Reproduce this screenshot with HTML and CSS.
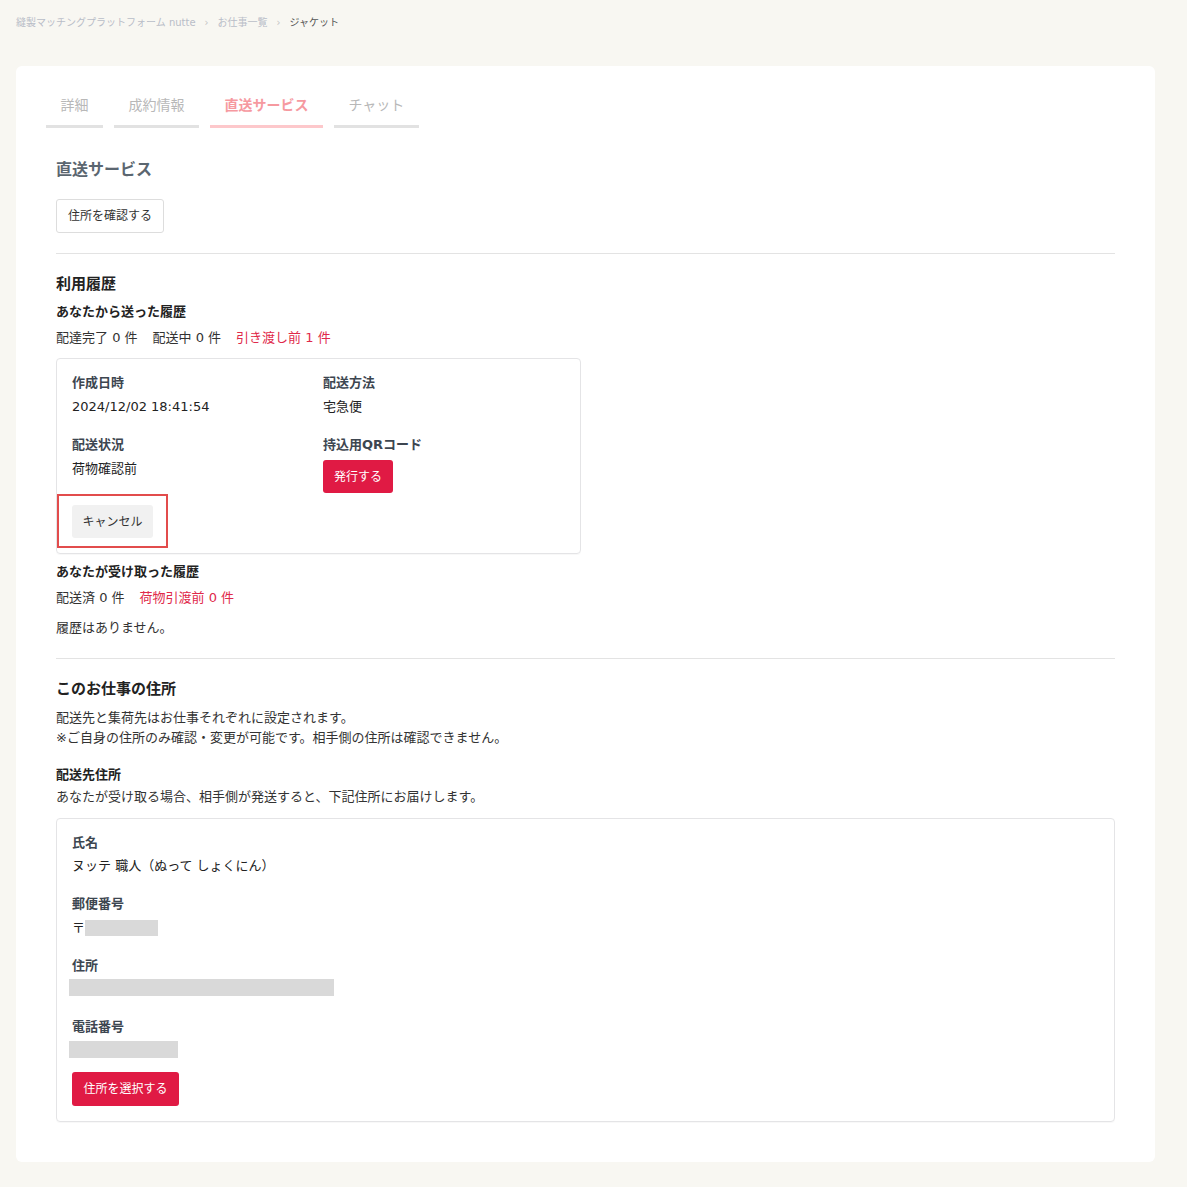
FILE: index.html
```html
<!DOCTYPE html>
<html lang="ja">
<head>
  <meta charset="UTF-8">
  <meta name="viewport" content="width=device-width, initial-scale=1.0">
  <title>ジャケット | nutte</title>
  <link rel="stylesheet" href="styles.css">
</head>
<body>
  <div id="page">
    <nav class="breadcrumb">
      <a href="#">縫製マッチングプラットフォーム nutte</a>
      <span class="sep">›</span>
      <a href="#">お仕事一覧</a>
      <span class="sep">›</span>
      <span class="current">ジャケット</span>
    </nav>

    <div class="panel">
      <ul class="tabs">
        <li class="tab">詳細</li>
        <li class="tab">成約情報</li>
        <li class="tab active">直送サービス</li>
        <li class="tab">チャット</li>
      </ul>

      <h2 class="page-title">直送サービス</h2>
      <button class="btn btn-outline">住所を確認する</button>

      <hr class="divider">

      <!-- 利用履歴 -->
      <h3 class="section-title">利用履歴</h3>
      <h4 class="sub-title">あなたから送った履歴</h4>
      <p class="counts">
        <span>配達完了 0 件</span>
        <span>配送中 0 件</span>
        <span class="red">引き渡し前 1 件</span>
      </p>

      <div class="box history-box">
        <div class="field">
          <div class="label">作成日時</div>
          <div class="value">2024/12/02 18:41:54</div>
        </div>
        <div class="field">
          <div class="label">配送方法</div>
          <div class="value">宅急便</div>
        </div>
        <div class="field">
          <div class="label">配送状況</div>
          <div class="value">荷物確認前</div>
        </div>
        <div class="field">
          <div class="label">持込用QRコード</div>
          <button class="btn btn-red">発行する</button>
        </div>
        <div class="cancel-row">
          <span class="highlight">
            <button class="btn btn-gray">キャンセル</button>
          </span>
        </div>
      </div>

      <h4 class="sub-title received">あなたが受け取った履歴</h4>
      <p class="counts">
        <span>配送済 0 件</span>
        <span class="red">荷物引渡前 0 件</span>
      </p>
      <p class="empty">履歴はありません。</p>

      <hr class="divider">

      <!-- 住所 -->
      <h3 class="section-title address-title">このお仕事の住所</h3>
      <p class="note">配送先と集荷先はお仕事それぞれに設定されます。<br>※ご自身の住所のみ確認・変更が可能です。相手側の住所は確認できません。</p>

      <h4 class="sub-title dest">配送先住所</h4>
      <p class="note">あなたが受け取る場合、相手側が発送すると、下記住所にお届けします。</p>

      <div class="box address-box">
        <div class="field">
          <div class="label">氏名</div>
          <div class="value name">ヌッテ 職人（ぬって しょくにん）</div>
        </div>
        <div class="field">
          <div class="label">郵便番号</div>
          <div class="value zip-row">〒<span class="masked zip"></span></div>
        </div>
        <div class="field">
          <div class="label">住所</div>
          <div class="masked addr"></div>
        </div>
        <div class="field tel-field">
          <div class="label">電話番号</div>
          <div class="masked tel"></div>
        </div>
        <button class="btn btn-red select-btn">住所を選択する</button>
      </div>
    </div>
  </div>
</body>
</html>
```

FILE: styles.css
```css
body {
  margin: 0;
  padding: 0;
  background-color: #f8f7f2;
  color: #222222;
  font-family: "DejaVu Sans", "Noto Sans CJK JP", sans-serif;
}

#page {
  padding: 17px 32px 25px 16px;
}

.breadcrumb {
  display: flex;
  align-items: center;
  gap: 9px;
  font-size: 10px;
  line-height: 12px;
  color: #b9bdc8;
}
.breadcrumb a {
  color: #b9bdc8;
  text-decoration: none;
}
.breadcrumb .sep {
  color: #c4c4c4;
}
.breadcrumb .current {
  color: #555555;
}

.panel {
  margin-top: 37px;
  background-color: #ffffff;
  border-radius: 6px;
  padding: 21px 40px 40px;
}

.tabs {
  list-style: none;
  margin: 0 0 0 -10px;
  padding: 0;
  display: flex;
  gap: 11px;
}
.tab {
  padding: 8px 14.5px 10px;
  font-size: 14px;
  line-height: 20px;
  color: #b8b8b8;
  border-bottom: 3px solid #e2e2e2;
}
.tab.active {
  color: #f6999f;
  font-weight: bold;
  border-bottom-color: #fdc8cb;
}

.page-title {
  margin: 30px 0 17px;
  font-size: 16px;
  line-height: 24px;
  color: #5b6670;
}

.btn {
  font-family: inherit;
  font-size: 12px;
  line-height: 18px;
  border-radius: 3px;
  cursor: pointer;
}
.btn-outline {
  background-color: #ffffff;
  border: 1px solid #dddddd;
  color: #333333;
  padding: 7px 11px 7px;
}
.btn-red {
  background-color: #e01a44;
  border: none;
  color: #ffffff;
  padding: 8px 11px 7px;
}
.btn-gray {
  background-color: #f1f1f1;
  border: none;
  color: #333333;
  padding: 8px 10.5px 7px;
}

.divider {
  border: none;
  border-top: 1px solid #e3e3e3;
  margin: 20px 0 0;
}

.section-title {
  margin: 19px 0 7px;
  font-size: 15px;
  line-height: 22px;
  color: #222222;
}
.address-title {
  margin-bottom: 8px;
}

.sub-title {
  margin: 0;
  font-size: 13px;
  line-height: 20px;
  color: #222222;
}
.sub-title.received {
  margin-top: 8px;
}
.sub-title.dest {
  margin-top: 17px;
  margin-bottom: 2px;
}

.counts {
  margin: 6px 0 0;
  display: flex;
  gap: 15px;
  font-size: 13px;
  line-height: 20px;
  color: #333333;
}
.red {
  color: #e0294a;
}

.empty {
  margin: 10px 0 0;
  font-size: 13px;
  line-height: 20px;
  color: #333333;
}

.note {
  margin: 0;
  font-size: 13px;
  line-height: 20px;
  color: #333333;
}

.box {
  border: 1px solid #e4e4e6;
  border-radius: 4px;
  box-shadow: 0 1px 1px rgba(0, 0, 0, 0.03);
}

.history-box {
  width: 493px;
  margin-top: 10px;
  padding: 14px 15px 15px;
  display: grid;
  grid-template-columns: 251px 1fr;
  row-gap: 18px;
}

.label {
  font-size: 13px;
  line-height: 20px;
  font-weight: bold;
  color: #3d4650;
}
.value {
  margin-top: 4px;
  font-size: 13px;
  line-height: 20px;
  color: #222222;
}
.field .btn-red {
  margin-top: 5px;
}

.cancel-row {
  grid-column: 1 / 3;
  margin-top: -6px;
}
.highlight {
  position: relative;
  display: inline-block;
  vertical-align: top;
}
.highlight .btn {
  display: block;
}
.highlight::after {
  content: "";
  position: absolute;
  top: -11px;
  left: -15px;
  right: -15px;
  bottom: -10px;
  border: 2px solid #e24c4c;
}

.address-box {
  margin-top: 11px;
  padding: 14px 15px 15px;
}
.address-box .field + .field {
  margin-top: 18px;
}
.address-box .field + .tel-field {
  margin-top: 21px;
}
.address-box .value.name {
  margin-top: 3px;
}
.zip-row {
  display: flex;
  align-items: center;
}
.masked {
  display: inline-block;
  height: 17px;
  background-color: #d9d9d9;
}
.masked.zip {
  width: 73px;
  height: 16px;
}
.masked.addr {
  display: block;
  width: 265px;
  margin: 3px 0 0 -3px;
}
.masked.tel {
  display: block;
  width: 109px;
  margin: 4px 0 0 -3px;
}
.select-btn {
  display: block;
  margin-top: 14px;
  padding: 8px 11.5px 8px;
}
```
